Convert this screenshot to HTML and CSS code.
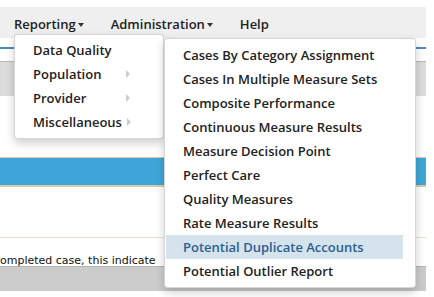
FILE: index.html
```
<!doctype html>
<html lang="en">
    <head>
        <meta charset="UTF-8" />
        <meta name="viewport" content="width=device-width, initial-scale=1.0" />
        <title>Reports</title>
        <link rel="stylesheet" href="styles.css">
    </head>
    <body>
        <div class="page">
            <div class="nav-bar">
                <span class="nav-link">Reporting<i class="caret"></i></span>
                <span class="nav-link">Administration<i class="caret"></i></span>
                <span class="nav-link">Help</span>
            </div>
            <div class="tab-line"></div>
            <div class="tool-band"></div>
            <div class="section-bar"></div>
            <div class="notice">
                <p>ompleted case, this indicate</p>
            </div>
            <div class="footer-band"></div>

            <ul class="menu menu-main">
                <li>Data Quality</li>
                <li>Population<i class="sub-caret"></i></li>
                <li>Provider<i class="sub-caret"></i></li>
                <li>Miscellaneous<i class="sub-caret"></i></li>
            </ul>

            <ul class="menu menu-sub">
                <li>Cases By Category Assignment</li>
                <li>Cases In Multiple Measure Sets</li>
                <li>Composite Performance</li>
                <li>Continuous Measure Results</li>
                <li>Measure Decision Point</li>
                <li>Perfect Care</li>
                <li>Quality Measures</li>
                <li>Rate Measure Results</li>
                <li class="active">Potential Duplicate Accounts</li>
                <li>Potential Outlier Report</li>
            </ul>
        </div>
    </body>
</html>
```

FILE: styles.css
```
body {
    margin: 0;
    background-color: #ffffff;
    font-family: "Open Sans", Arial, sans-serif;
    color: #222;
}
.page {
    position: relative;
    width: 426px;
    height: 297px;
    padding-top: 7px;
    box-sizing: border-box;
    overflow: hidden;
}
.nav-bar {
    display: flex;
    align-items: center;
    height: 31px;
    padding: 3px 0 0 14px;
    box-sizing: border-box;
    gap: 27px;
    background-color: #efefef;
    font-size: 13px;
    font-weight: 600;
}
.nav-link {
    display: flex;
    align-items: center;
    color: #222;
}
.caret {
    display: inline-block;
    margin-left: 2px;
    margin-top: 2px;
    border-top: 4px solid #333;
    border-left: 3px solid transparent;
    border-right: 3px solid transparent;
}
.tab-line {
    margin-top: 9px;
    height: 2px;
    background-color: #4f87bc;
}
.tool-band {
    margin-top: 12px;
    height: 34px;
    background-color: #dcdcdc;
    border-top: 1px solid #b9b9b9;
}
.section-bar {
    margin-top: 61px;
    height: 27px;
    background-color: #3ea6d8;
    border-top: 1px solid #d9c9ad;
    border-bottom: 2px solid #d9c9ad;
}
.notice {
    margin-top: 50px;
    border-top: 1px solid #eadfcb;
}
.notice p {
    margin: 0;
    padding-top: 18px;
    font-family: "DejaVu Sans", Verdana, sans-serif;
    font-size: 11px;
    line-height: 10px;
    white-space: nowrap;
    color: #111;
}
.footer-band {
    height: 24px;
    background-color: #cccccc;
    border-top: 1px solid #b4b4b4;
}
.menu {
    position: absolute;
    margin: 0;
    list-style: none;
    background-color: #ffffff;
    border: 1px solid rgba(0, 0, 0, 0.16);
    border-radius: 4px;
    box-shadow: 0 4px 10px rgba(0, 0, 0, 0.2);
    font-size: 13px;
    font-weight: 600;
    box-sizing: border-box;
}
.menu li {
    display: flex;
    align-items: center;
    height: 24px;
    white-space: nowrap;
}
.menu-main {
    left: 14px;
    top: 34px;
    width: 150px;
    height: 105px;
    padding: 3px 0 0 0;
}
.menu-main li {
    padding: 0 33px 0 18px;
}
.sub-caret {
    margin-left: auto;
    border-left: 4px solid #cccccc;
    border-top: 4px solid transparent;
    border-bottom: 4px solid transparent;
}
.menu-main li:last-child .sub-caret {
    margin-left: 5px;
}
.menu-sub {
    left: 164px;
    top: 38px;
    width: 252px;
    height: 250px;
    padding: 4px 12px 0 1px;
}
.menu-sub li {
    padding-left: 17px;
}
.menu-sub li.active {
    background-color: #d5e3ed;
    color: #2b5e8e;
}
```
